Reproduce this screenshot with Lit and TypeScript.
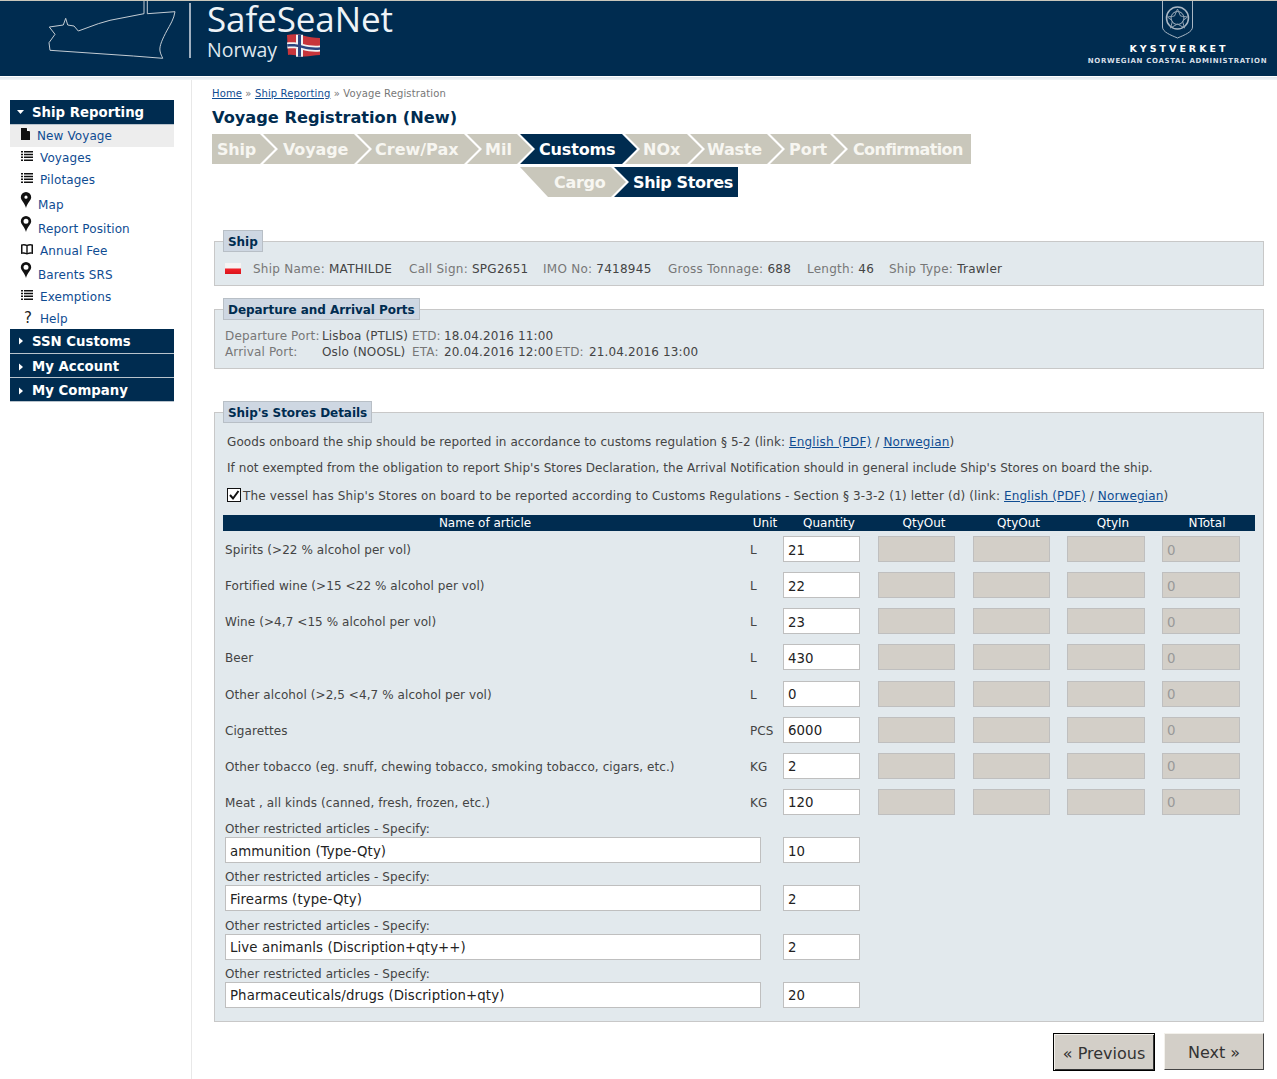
import { LitElement, html, css, svg, unsafeCSS } from 'lit';
import { customElement } from 'lit/decorators.js';

const NAVY = unsafeCSS('#002c50');

const ICONS: Record<string, unknown> = {
  file: svg`<path d="M1 1h5.500L10 4.500V13H1z"/><path d="M7 0.800 10.200 4H7z" fill="#fff"/>`,
  list: svg`<path d="M1 2h2v1.500H1zM4 2h9v1.500H4zM1 4.800h2v1.500H1zM4 4.800h9v1.500H4zM1 7.600h2v1.500H1zM4 7.600h9v1.500H4zM1 10.400h2v1.500H1zM4 10.400h9v1.500H4z"/>`,
  pin: svg`<path fill-rule="evenodd" d="M6 0a5.200 5.200 0 0 1 5.200 5.200C11.200 8.200 7.400 10.400 6 16 4.600 10.400.8 8.200.8 5.200A5.200 5.200 0 0 1 6 0zm0 3.600a1.600 1.600 0 1 0 0 3.200 1.600 1.600 0 0 0 0-3.200z"/>`,
  pin2: svg`<path fill-rule="evenodd" d="M6 0a5.200 5.200 0 0 1 5.200 5.200C11.200 8.200 7.400 10.400 6 16 4.600 10.400.8 8.200.8 5.200A5.200 5.200 0 0 1 6 0zm0 2.700a2.500 2.500 0 1 0 0 5 2.500 2.500 0 0 0 0-5z"/>`,
  book: svg`<path fill-rule="evenodd" d="M1 2.500c2-.8 4.300-.8 6 .3 1.700-1.100 4-1.100 6-.3V12c-2-.6-4.300-.5-6 .6-1.700-1.100-4-1.200-6-.6zM2.500 3.700v6.700c1.300-.2 2.700-.1 3.800.5V4.100C5.200 3.500 3.800 3.400 2.500 3.700zm9 0c-1.300-.3-2.700-.2-3.800.4v6.800c1.100-.6 2.500-.7 3.800-.5z"/>`,
};

const MENU = [
  { label: 'New Voyage', icon: 'file', h: 22, gap: 3, active: true },
  { label: 'Voyages', icon: 'list', h: 22, gap: 6 },
  { label: 'Pilotages', icon: 'list', h: 22, gap: 6 },
  { label: 'Map', icon: 'pin', h: 25, gap: 6 },
  { label: 'Report Position', icon: 'pin2', h: 24, gap: 6 },
  { label: 'Annual Fee', icon: 'book', h: 22, gap: 6 },
  { label: 'Barents SRS', icon: 'pin2', h: 24, gap: 6 },
  { label: 'Exemptions', icon: 'list', h: 22, gap: 6 },
  { label: 'Help', icon: 'help', h: 21, gap: 0 },
];

// left padding, box width and letter spacing of each wizard step
const STEPS = [
  { label: 'Ship', pad: 5, w: 63, ls: -0.2, cls: 'first' },
  { label: 'Voyage', pad: 20, w: 106, ls: -0.15, cls: '' },
  { label: 'Crew/Pax', pad: 18, w: 122, ls: 0, cls: '' },
  { label: 'Mil', pad: 18, w: 65, ls: 0, cls: '' },
  { label: 'Customs', pad: 19, w: 117, ls: -0.15, cls: 'on' },
  { label: 'NOx', pad: 18, w: 77, ls: 0, cls: '' },
  { label: 'Waste', pad: 17, w: 92, ls: -0.2, cls: '' },
  { label: 'Port', pad: 19, w: 75, ls: 0, cls: '' },
  { label: 'Confirmation', pad: 20, w: 138, ls: -0.65, cls: 'last' },
];

const SHIP_INFO = [
  ['Ship Name: ', 'MATHILDE', 139],
  ['Call Sign: ', 'SPG2651', 117],
  ['IMO No: ', '7418945', 108],
  ['Gross Tonnage: ', '688', 122],
  ['Length: ', '46', 65],
  ['Ship Type: ', 'Trawler', 115],
];

const ROWS = [
  ['Spirits (>22 % alcohol per vol)', 'L', '21'],
  ['Fortified wine (>15 <22 % alcohol per vol)', 'L', '22'],
  ['Wine (>4,7 <15 % alcohol per vol)', 'L', '23'],
  ['Beer', 'L', '430'],
  ['Other alcohol (>2,5 <4,7 % alcohol per vol)', 'L', '0'],
  ['Cigarettes', 'PCS', '6000'],
  ['Other tobacco (eg. snuff, chewing tobacco, smoking tobacco, cigars, etc.)', 'KG', '2'],
  ['Meat , all kinds (canned, fresh, frozen, etc.)', 'KG', '120'],
];

const OTHER = [
  ['ammunition (Type-Qty)', '10'],
  ['Firearms (type-Qty)', '2'],
  ['Live animanls (Discription+qty++)', '2'],
  ['Pharmaceuticals/drugs (Discription+qty)', '20'],
];

@customElement('app-root')
export class AppRoot extends LitElement {
  static styles = css`
    :host {
      display: block;
      min-height: 1079px;
      background: #fff;
      font-family: "DejaVu Sans", Verdana, sans-serif;
      font-size: 12px;
      color: #444;
    }
    a { color: #0f4c92; }

    .header {
      height: 75px;
      border-top: 1px solid #c9c7bb;
      background: ${NAVY};
      display: flex;
      overflow: hidden;
      color: #fff;
    }
    .ship { margin-left: 47px; width: 132px; height: 60px; flex: none; }
    .rule { width: 2px; height: 55px; background: #9fb0c0; margin: 2px 0 0 10px; flex: none; }
    .brand { margin-left: 16px; flex: none; }
    .brand-name { font: 35px/36px "Open Sans", sans-serif; letter-spacing: -0.1px; height: 36px; color: #eef3f7; }
    .brand-sub { display: flex; align-items: flex-start; gap: 10px; height: 26px; font: 19.5px/26px "Open Sans", sans-serif; color: #dfe7ee; }
    .flag { width: 33px; height: 24px; margin-top: -3px; }
    .agency { margin-left: auto; width: 187px; margin-right: 6px; text-align: center; flex: none; }
    .emblem { display: block; width: 34px; height: 38px; margin: 0 auto 3px; transform: translateX(-0.5px); }
    .agency-name { font: bold 9.5px/13px "DejaVu Sans", sans-serif; letter-spacing: 3px; margin-left: 3px; }
    .agency-sub { font: bold 7px/13px "DejaVu Sans", sans-serif; letter-spacing: 0.66px; white-space: nowrap; color: #d5dee6; }
    .strip { height: 4px; background: linear-gradient(#fff 0 1px, #dfe7ee 1px, #f2f5f8); }

    .page { display: flex; align-items: stretch; min-height: 999px; }

    .side { width: 192px; flex: none; box-sizing: border-box; border-right: 1px solid #e8e8e8; padding: 20px 17px 0 10px; }
    .group {
      display: flex; align-items: center;
      background: ${NAVY};
      color: #fff; font-weight: bold; font-size: 13.3px;
      height: 24px; box-sizing: border-box; border-bottom: 1px solid #b9c3cc; padding-top: 2px;
    }
    .group.tall { height: 25px; padding-top: 0; }
    .caret { width: 22px; display: flex; justify-content: center; flex: none; }
    .item { display: flex; align-items: flex-end; color: #0f4c92; padding-left: 10px; box-sizing: border-box; padding-bottom: 4px; letter-spacing: 0.1px; }
    .item.active { background: #ededed; }
    .item.help { padding-bottom: 3px; }
    .item svg { width: 14px; height: 14px; flex: none; margin-bottom: 2px; }
    .item svg.big { width: 12px; height: 16px; margin: 0 0 4px 0; }
    .qm { width: 14px; margin-right: 6px; padding-left: 2px; box-sizing: border-box; text-align: center; color: #222; font-size: 15px; line-height: 15px; }

    .main { flex: 1; min-width: 0; padding: 7px 13px 0 20px; }
    .crumb { font-size: 10px; line-height: 13px; color: #777; letter-spacing: 0.13px; }
    .title { font-size: 16.2px; line-height: 22px; font-weight: bold; color: ${NAVY}; margin: 7px 0 5px; }

    .steps { display: flex; height: 30px; }
    .steps.sub { margin: 3px 0 0 308px; }
    .step {
      box-sizing: border-box; height: 30px; line-height: 32px;
      font-size: 16px; font-weight: bold; color: #f7f6f1;
      background: #c9c7bb; white-space: nowrap; flex: none;
      margin-left: -12px;
      clip-path: polygon(0 0, calc(100% - 15px) 0, 100% 50%, calc(100% - 15px) 100%, 0 100%, 15px 50%);
    }
    .step.first { margin-left: 0; clip-path: polygon(0 0, calc(100% - 15px) 0, 100% 50%, calc(100% - 15px) 100%, 0 100%); }
    .step.last { clip-path: polygon(0 0, 100% 0, 100% 100%, 0 100%, 15px 50%); }
    .step.on { background: ${NAVY}; color: #fff; }
    .step.cargo { margin-left: 0; clip-path: polygon(0 0, calc(100% - 15px) 0, 100% 50%, calc(100% - 15px) 100%, 28px 100%); }

    fieldset {
      margin: 0 0 0 2px; min-width: 0;
      border: 1px solid #c8c8c8;
      background: #e2e9ed;
      padding: 0 8px;
    }
    legend {
      background: #ced7e2; border: 1px solid #b8bfc6;
      color: ${NAVY};
      font-weight: bold; font-size: 12px; line-height: 22px; height: 22px; letter-spacing: -0.05px;
      box-sizing: border-box; padding: 0 4px;
    }
    .f-ship { margin-top: 33px; }
    .f-ports { margin-top: 12px; }
    .f-stores { margin-top: 32px; }
    .k { color: #777; }

    .ship-row { display: flex; align-items: center; gap: 17px; height: 33px; padding-left: 2px; letter-spacing: 0.25px; white-space: pre; }
    .ship-row .pl { width: 16px; height: 11px; margin-right: -5px; flex: none; }
    .ship-row .pair { flex: none; }

    .ports { display: grid; grid-template-columns: 97px 90px 32px 111px 34px 1fr; line-height: 16px; padding: 8px 0 8px 2px; letter-spacing: 0.14px; }

    .copy { margin: 0; padding-left: 4px; line-height: 16px; white-space: nowrap; }
    .copy.c1 { margin-top: 11px; letter-spacing: 0.08px; }
    .copy.c1 a { letter-spacing: 0.2px; }
    .copy.c2 { margin-top: 10px; letter-spacing: 0.056px; }
    .copy.c3 { margin-top: 12px; display: flex; align-items: center; letter-spacing: 0.14px; }
    .tick { width: 14px; height: 14px; flex: none; margin: -2px 2px 0 0; }

    .thead, .row { display: grid; grid-template-columns: 527px 33px 95px 95px 94px 95px 93px; }
    .thead { margin-top: 11px; background: ${NAVY}; color: #fff; height: 16px; line-height: 16px; text-align: center; }
    .thead span { padding-right: 3px; }
    .row { height: 36.14px; align-items: center; letter-spacing: 0.08px; }
    .row .name { padding: 2px 0 0 2px; }
    .row .unit { padding-top: 2px; }
    input {
      box-sizing: border-box; height: 26px; width: 77px; margin: 0;
      border: 1px solid #bfbfbf; background: #fff; color: #222;
      font: 13.3px "DejaVu Sans", Verdana, sans-serif; padding: 2px 4px 0; letter-spacing: 0.1px;
      outline: none; display: block;
    }
    input:disabled { background: #d3cfc8; color: #999; }
    .wide { width: 78px; }
    .other { display: grid; grid-template-columns: 558px 77px; height: 48.33px; padding-left: 2px; align-content: start; letter-spacing: 0.08px; }
    .other .lbl { grid-column: 1 / 3; line-height: 18px; height: 17px; }
    .other .txt { width: 536px; }
    .others { padding-bottom: 8px; }

    .actions { display: flex; justify-content: flex-end; align-items: flex-start; gap: 9px; margin-top: 11px; }
    button {
      font: 16px "DejaVu Sans", Verdana, sans-serif; color: #333;
      background: #d3cfc8; box-sizing: border-box; height: 37px; width: 100px;
      border: 1px solid; border-color: #f3f1ec #444 #444 #f3f1ec; padding: 2px 0 0;
    }
    button.focus { width: 102px; height: 38px; border: 1px solid #000; box-shadow: inset 1px 1px #f3f1ec, inset -1px -1px #333; }
  `;

  private renderShip() {
    return html`<svg class="ship" viewBox="0 0 132 60" fill="none" stroke="#c4ccd3" stroke-width="1">
      <path d="M100.300 0V12.700L128 10.700C127 18 123 24 119.700 30 116 37 112 45 113 50 113.500 53 115 55.500 115.700 57.300L86.300 55 3 49.300 2 41.700 8 33.300 2.300 26 16.300 24 18.700 17.300 20.700 24 27 25 31.300 30 51.300 22.700 63 19.300 97 12.700V0"/>
    </svg>`;
  }

  private renderFlag() {
    return html`<svg class="flag" viewBox="0 0 33 24">
      <path d="M0 1c5-1 11-1 16 .5S27 4 33 4v17c-6 0-12 2-17 1.500S5 20 1 21z" fill="#c8353b"/>
      <path d="M9 .7h7v22H9zM0 8.500c6-.5 11 0 16 1.500s11 2 17 1.500v6c-6 .5-12 0-17-1.500S6 14 .5 14.500z" fill="#f2f2f2"/>
      <path d="M11 .7h3v22h-3zM0 10.200c6-.5 11 0 16 1.500s11 2 17 1.500v2.500c-6 .5-12 0-17-1.500S6 12.300 .5 12.800z" fill="#2b4580"/>
    </svg>`;
  }

  private renderEmblem() {
    return html`<svg class="emblem" viewBox="0 0 34 38" fill="none" stroke="#a9b7c4" stroke-width="1">
      <path d="M2 -2v28c0 5 8 8 15 11 7-3 15-6 15-11V-2" />
      <circle cx="17" cy="17" r="11" stroke-width="1.5"/>
      <circle cx="17" cy="17" r="6.5"/>
      <path d="M17 8l3 7 7 1-5 4 2 7-7-4-7 4 2-7-5-4 7-1z" stroke="#8fa0b0"/>
    </svg>`;
  }

  private renderMenu() {
    return MENU.map((m) => {
      const big = m.icon.startsWith('pin');
      const cls = `item ${m.active ? 'active' : ''} ${m.icon === 'help' ? 'help' : ''}`;
      return html`
        <div class=${cls} style="height:${m.h}px">
          ${m.icon === 'help'
            ? html`<span class="qm">?</span>`
            : html`<svg class=${big ? 'big' : ''} style="margin-right:${m.gap}px" viewBox="0 0 ${big ? '12 16' : '14 14'}" fill="#111">${ICONS[m.icon]}</svg>`}
          <span>${m.label}</span>
        </div>`;
    });
  }

  private renderCaret(open: boolean) {
    return html`<span class="caret"><svg width="8" height="8" viewBox="0 0 8 8" fill="#fff">
      ${open ? svg`<path d="M0 2h7L3.500 6z"/>` : svg`<path d="M2 0.500 6 4 2 7.500z"/>`}
    </svg></span>`;
  }

  render() {
    return html`
      <div class="header">
        ${this.renderShip()}
        <div class="rule"></div>
        <div class="brand">
          <div class="brand-name">SafeSeaNet</div>
          <div class="brand-sub"><span>Norway</span>${this.renderFlag()}</div>
        </div>
        <div class="agency">
          ${this.renderEmblem()}
          <div class="agency-name">KYSTVERKET</div>
          <div class="agency-sub">NORWEGIAN COASTAL ADMINISTRATION</div>
        </div>
      </div>
      <div class="strip"></div>
      <div class="page">
        <div class="side">
          <div class="group tall">${this.renderCaret(true)}Ship Reporting</div>
          ${this.renderMenu()}
          <div class="group tall">${this.renderCaret(false)}SSN Customs</div>
          <div class="group">${this.renderCaret(false)}My Account</div>
          <div class="group">${this.renderCaret(false)}My Company</div>
        </div>
        <div class="main">
          <div class="crumb"><a href="#">Home</a> » <a href="#">Ship Reporting</a> » Voyage Registration</div>
          <div class="title">Voyage Registration (New)</div>
          <div class="steps">
            ${STEPS.map((s) => html`<div class="step ${s.cls}" style="width:${s.w}px;padding-left:${s.pad}px;letter-spacing:${s.ls}px">${s.label}</div>`)}
          </div>
          <div class="steps sub">
            <div class="step cargo" style="width:106px;padding-left:34px;letter-spacing:-0.3px">Cargo</div>
            <div class="step on last" style="width:124px;padding-left:19px;letter-spacing:-0.36px">Ship Stores</div>
          </div>

          <fieldset class="f-ship">
            <legend>Ship</legend>
            <div class="ship-row">
              <svg class="pl" viewBox="0 0 16 11">
                <defs><linearGradient id="plred" x1="0" y1="0" x2="0" y2="1"><stop offset="0" stop-color="#f5222a"/><stop offset="1" stop-color="#d9141c"/></linearGradient></defs>
                <rect width="16" height="5.5" fill="#f6f4f4"/><rect y="5.5" width="16" height="5.5" fill="url(#plred)"/>
              </svg>
              ${SHIP_INFO.map(([k, v, w]) => html`<span class="pair" style="width:${w}px"><span class="k">${k}</span>${v}</span>`)}
            </div>
          </fieldset>

          <fieldset class="f-ports">
            <legend>Departure and Arrival Ports</legend>
            <div class="ports">
              <span class="k">Departure Port:</span><span>Lisboa (PTLIS)</span><span class="k">ETD:</span><span>18.04.2016 11:00</span><span></span><span></span>
              <span class="k">Arrival Port:</span><span>Oslo (NOOSL)</span><span class="k">ETA:</span><span>20.04.2016 12:00</span><span class="k">ETD:</span><span>21.04.2016 13:00</span>
            </div>
          </fieldset>

          <fieldset class="f-stores">
            <legend>Ship's Stores Details</legend>
            <p class="copy c1">Goods onboard the ship should be reported in accordance to customs regulation § 5-2 (link: <a href="#">English (PDF)</a> / <a href="#">Norwegian</a>)</p>
            <p class="copy c2">If not exempted from the obligation to report Ship's Stores Declaration, the Arrival Notification should in general include Ship's Stores on board the ship.</p>
            <p class="copy c3">
              <svg class="tick" viewBox="0 0 14 14"><rect x=".5" y=".5" width="13" height="13" fill="#fff" stroke="#111"/><path d="M3 7l3 3.500L11.500 3" fill="none" stroke="#111" stroke-width="2"/></svg>
              <span>The vessel has Ship's Stores on board to be reported according to Customs Regulations - Section § 3-3-2 (1) letter (d) (link: <a href="#">English (PDF)</a> / <a href="#">Norwegian</a>)</span>
            </p>
            <div class="thead">
              <span>Name of article</span><span>Unit</span><span>Quantity</span><span>QtyOut</span><span>QtyOut</span><span>QtyIn</span><span>NTotal</span>
            </div>
            ${ROWS.map(([name, unit, qty]) => html`
              <div class="row">
                <span class="name">${name}</span><span class="unit">${unit}</span>
                <input value=${qty} />
                <input disabled /><input disabled /><input class="wide" disabled /><input class="wide" disabled value="0" />
              </div>`)}
            <div class="others">
              ${OTHER.map(([name, qty]) => html`
                <div class="other">
                  <span class="lbl">Other restricted articles - Specify:</span>
                  <input class="txt" value=${name} />
                  <input value=${qty} />
                </div>`)}
            </div>
          </fieldset>

          <div class="actions">
            <button class="focus">« Previous</button>
            <button>Next »</button>
          </div>
        </div>
      </div>
    `;
  }
}
